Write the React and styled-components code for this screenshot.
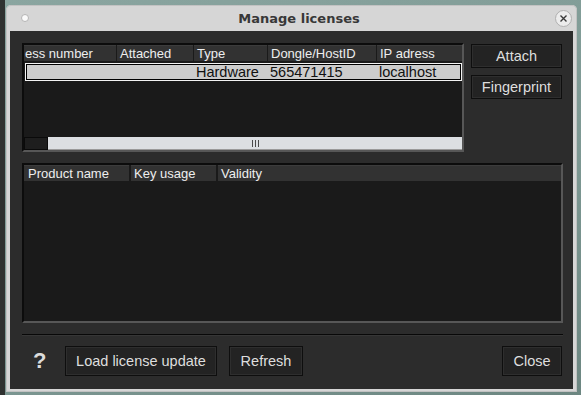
import React from 'react';
import styled, { createGlobalStyle } from 'styled-components';

const GlobalStyle = createGlobalStyle`
  html, body {
    margin: 0;
    padding: 0;
  }
  body {
    width: 581px;
    height: 395px;
    overflow: hidden;
    font-family: "Liberation Sans", Arial, sans-serif;
    background:
      linear-gradient(to right, #2f3130 0 5px, transparent 5px),
      linear-gradient(160deg, #8aa5a0 0%, #7d9893 60%, #6c8681 100%);
  }
`;

const Window = styled.div`
  margin: 5px 0 0 6px;
  width: 571px;
  height: 387px;
  box-sizing: border-box;
  display: flex;
  flex-direction: column;
  background: #d6d6d6;
  border-radius: 5px 5px 0 0;
  padding: 0 4px 3px 4px;
  box-shadow: inset 0 0 0 1px #c2c2c2;
`;

const TitleBar = styled.div`
  height: 26px;
  flex: none;
  display: flex;
  align-items: center;
  padding: 0 1px 0 11px;
`;

const Dot = styled.span`
  width: 6px;
  height: 6px;
  border-radius: 50%;
  background: #fafafa;
  border: 1px solid #b5b5b5;
`;

const Title = styled.div`
  flex: 1;
  text-align: center;
  padding-left: 14px;
  font-family: "DejaVu Sans", sans-serif;
  font-weight: bold;
  font-size: 13px;
  color: #383838;
`;

const CloseDot = styled.span`
  width: 15px;
  height: 15px;
  border-radius: 50%;
  background: #ececec;
  border: 1px solid #b0b0b0;
  display: flex;
  align-items: center;
  justify-content: center;
`;

const Body = styled.div`
  flex: 1;
  display: flex;
  flex-direction: column;
  background: #2c2c2c;
  padding: 12px 10px 13px 12px;
`;

const TopSection = styled.div`
  display: flex;
  gap: 7px;
  height: 109px;
`;

const Panel = styled.div`
  width: ${(p) => p.$width}px;
  height: ${(p) => p.$height}px;
  box-sizing: border-box;
  display: flex;
  flex-direction: column;
  background: #1a1a1a;
  border-style: solid;
  border-width: 2px;
  border-color: #0c0c0c #575757 #575757 #0c0c0c;
`;

const HeaderRow = styled.div`
  display: grid;
  grid-template-columns: ${(p) => p.$cols};
  column-gap: ${(p) => p.$gap}px;
  height: 16px;
  flex: none;
`;

const HeaderCell = styled.div`
  background: #323232;
  border-top: 1px solid #3c3c3c;
  color: #eeeeee;
  font-size: 13px;
  line-height: 15px;
  padding-left: ${(p) => p.$pad}px;
  white-space: nowrap;
  overflow: hidden;
`;

const Rows = styled.div`
  flex: 1;
  padding-top: 2px;
`;

const SelectedRow = styled.div`
  height: 18px;
  box-sizing: border-box;
  margin: 0 0 0 1px;
  display: grid;
  grid-template-columns: 168px 74px 109px auto;
  background: #cccccc;
  border: 1px solid #f4f4f4;
  box-shadow: inset 0 0 0 1px #000;
  color: #111;
  font-size: 14.5px;
  line-height: 16px;
`;

const RowCell = styled.div`
  padding-left: 2px;
  white-space: nowrap;
`;

const Scrollbar = styled.div`
  height: 13px;
  flex: none;
  display: flex;
`;

const Trough = styled.div`
  width: 24px;
  background: #1e1e1e;
  border: 1px solid #0a0a0a;
  box-sizing: border-box;
`;

const Thumb = styled.div`
  flex: 1;
  background: #dcdfe2;
  border-bottom: 1px solid #9a9a9a;
  display: flex;
  align-items: center;
  justify-content: center;
  gap: 2px;
`;

const Grip = styled.span`
  width: 1px;
  height: 7px;
  background: #4a4a4a;
`;

const ButtonColumn = styled.div`
  display: flex;
  flex-direction: column;
  gap: 7px;
  padding-top: 1px;
`;

const Button = styled.button`
  width: ${(p) => p.$width}px;
  height: ${(p) => p.$height}px;
  background: #232323;
  border: 1px solid #0e0e0e;
  box-shadow: inset 0 0 0 1px #2e2e2e;
  color: #dedede;
  font-family: "Liberation Sans", Arial, sans-serif;
  font-size: 14.5px;
  padding: 0;
  margin-left: ${(p) => (p.$push ? 'auto' : '0')};
`;

const ProductSection = styled.div`
  margin-top: 11px;
`;

const Separator = styled.div`
  margin-top: 11px;
  height: 1px;
  background: #080808;
  border-bottom: 1px solid #363636;
`;

const Footer = styled.div`
  margin-top: 10px;
  display: flex;
  align-items: center;
  gap: 12px;
  padding-right: 1px;
`;

const HelpMark = styled.div`
  width: 31px;
  padding-left: 11px;
  box-sizing: border-box;
  color: #dcdcdc;
  font-weight: bold;
  font-size: 22px;
  line-height: 30px;
`;

export default function App() {
  return (
    <>
      <GlobalStyle />
      <Window>
        <TitleBar>
          <Dot />
          <Title>Manage licenses</Title>
          <CloseDot>
            <svg width="9" height="9" viewBox="0 0 9 9">
              <path d="M1.5 1.5 L7.5 7.5 M7.5 1.5 L1.5 7.5" stroke="#3a3a3a" strokeWidth="1.4" />
            </svg>
          </CloseDot>
        </TitleBar>
        <Body>
          <TopSection>
            <Panel $width={442} $height={109}>
              <HeaderRow $cols="92px 76px 73px 108px auto" $gap={1}>
                <HeaderCell $pad={1}>ess number</HeaderCell>
                <HeaderCell $pad={3}>Attached</HeaderCell>
                <HeaderCell $pad={3}>Type</HeaderCell>
                <HeaderCell $pad={3}>Dongle/HostID</HeaderCell>
                <HeaderCell $pad={3}>IP adress</HeaderCell>
              </HeaderRow>
              <Rows>
                <SelectedRow>
                  <RowCell />
                  <RowCell>Hardware</RowCell>
                  <RowCell>565471415</RowCell>
                  <RowCell>localhost</RowCell>
                </SelectedRow>
              </Rows>
              <Scrollbar>
                <Trough />
                <Thumb>
                  <Grip />
                  <Grip />
                  <Grip />
                </Thumb>
              </Scrollbar>
            </Panel>
            <ButtonColumn>
              <Button $width={91} $height={24}>Attach</Button>
              <Button $width={91} $height={24}>Fingerprint</Button>
            </ButtonColumn>
          </TopSection>
          <ProductSection>
            <Panel $width={541} $height={160}>
              <HeaderRow $cols="105px 85px auto" $gap={2}>
                <HeaderCell $pad={4}>Product name</HeaderCell>
                <HeaderCell $pad={3}>Key usage</HeaderCell>
                <HeaderCell $pad={3}>Validity</HeaderCell>
              </HeaderRow>
            </Panel>
          </ProductSection>
          <Separator />
          <Footer>
            <HelpMark>?</HelpMark>
            <Button $width={152} $height={30}>Load license update</Button>
            <Button $width={74} $height={30}>Refresh</Button>
            <Button $width={60} $height={30} $push>Close</Button>
          </Footer>
        </Body>
      </Window>
    </>
  );
}
